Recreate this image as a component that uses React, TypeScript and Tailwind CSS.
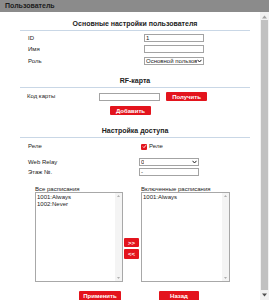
const red = 'bg-[#e3141d] text-white font-bold text-[6px] leading-none rounded-[1px] flex items-center justify-center';

function Title({ text, className }: { text: string; className: string }) {
  return (
    <div className={`${className} h-[14px] leading-[13px] border-b border-[#c9d7e6] text-center text-[7px] font-bold text-[#222]`}>
      {text}
    </div>
  );
}

function Field({ value }: { value: string }) {
  return (
    <div className="w-[60px] h-[8px] border border-[#a3a3a3] bg-white text-[6px] leading-[6px] px-[1px] text-[#222]">
      {value}
    </div>
  );
}

function Select({ value, className }: { value: string; className: string }) {
  return (
    <div className={`${className} w-[60px] h-[8px] border border-[#a3a3a3] bg-white flex items-center justify-between px-[1px] text-[6px] leading-none text-[#222]`}>
      <span className="overflow-hidden whitespace-nowrap">{value}</span>
      <svg width="5" height="4" viewBox="0 0 5 4" className="shrink-0">
        <path d="M0.5 0.8 L2.5 3 L4.5 0.8" fill="none" stroke="#222" strokeWidth="1" />
      </svg>
    </div>
  );
}

function ListBox({ items, width }: { items: string[]; width: string }) {
  return (
    <div className={`${width} h-[90px] border border-[#a8a8a8] bg-white flex`}>
      <div className="flex-1 text-[6px] leading-[6.5px] text-[#222] pl-[1px] pt-[1px]">
        {items.map((i) => (
          <div key={i}>{i}</div>
        ))}
      </div>
      <div className="w-[7px] bg-[#f4f4f4] flex flex-col justify-between items-center py-[2px]">
        <svg width="3" height="2" viewBox="0 0 3 2"><path d="M0 2 L1.5 0 L3 2Z" fill="#b0b0b0" /></svg>
        <svg width="3" height="2" viewBox="0 0 3 2"><path d="M0 0 L1.5 2 L3 0Z" fill="#b0b0b0" /></svg>
      </div>
    </div>
  );
}

export default function App() {
  return (
    <div className="w-[269px] h-[300px] overflow-hidden flex flex-col bg-white font-['Liberation_Sans',Arial,sans-serif] text-[#222]">
      <div className="h-[12px] shrink-0 bg-[#8b8b8b] pl-[5px] text-[7px] font-bold leading-[12px] text-[#1c1c1c]">
        Пользователь
      </div>

      <div className="flex flex-1 min-h-0">
        <div className="w-[260px] pl-[20px]">
          <div className="w-[230px] flex flex-col text-[6px]">
            <Title text="Основные настройки пользователя" className="mt-[5px]" />

            <div className="mt-[3px] flex items-center h-[8px]">
              <div className="w-[124px] pl-[8px]">ID</div>
              <Field value="1" />
            </div>
            <div className="mt-[3px] flex items-center h-[8px]">
              <div className="w-[124px] pl-[8px]">Имя</div>
              <Field value="" />
            </div>
            <div className="mt-[4px] flex items-center h-[8px]">
              <div className="w-[124px] pl-[8px]">Роль</div>
              <Select value="Основной пользов" className="" />
            </div>

            <Title text="RF-карта" className="mt-[9px]" />

            <div className="mt-[4px] flex items-center h-[9px]">
              <div className="w-[79px] pl-[7px]">Код карты</div>
              <div className="w-[61px] h-[8px] border border-[#a3a3a3]" />
              <button className={`${red} ml-[6px] w-[41px] h-[9px]`}>Получить</button>
            </div>
            <button className={`${red} mt-[5px] ml-[90px] w-[41px] h-[9px]`}>Добавить</button>

            <Title text="Настройка доступа" className="mt-[9px]" />

            <div className="mt-[5px] flex items-center h-[7px]">
              <div className="w-[121px] pl-[8px]">Реле</div>
              <span className="w-[6px] h-[6px] bg-[#e3141d] rounded-[1px] flex items-center justify-center">
                <svg width="5" height="5" viewBox="0 0 5 5">
                  <path d="M1 2.6 L2 3.6 L4 1.2" fill="none" stroke="#fff" strokeWidth="0.9" />
                </svg>
              </span>
              <span className="ml-[2px]">Реле</span>
            </div>
            <div className="mt-[8px] flex items-center h-[8px]">
              <div className="w-[119px] pl-[8px]">Web Relay</div>
              <Select value="0" className="" />
            </div>
            <div className="mt-[2px] flex items-center h-[8px]">
              <div className="w-[119px] pl-[8px]">Этаж №.</div>
              <Field value="-" />
            </div>

            <div className="mt-[10px] flex">
              <div className="ml-[15px] flex flex-col">
                <div className="h-[6px] leading-[6px]">Все расписания</div>
                <ListBox items={['1001:Always', '1002:Never']} width="w-[88px]" />
              </div>
              <div className="ml-[1px] mt-[52px] flex flex-col gap-[2px]">
                <button className={`${red} w-[15px] h-[9px]`}>&gt;&gt;</button>
                <button className={`${red} w-[15px] h-[10px]`}>&lt;&lt;</button>
              </div>
              <div className="ml-[2px] flex flex-col">
                <div className="h-[6px] leading-[6px]">Включенные расписания</div>
                <ListBox items={['1001:Always']} width="w-[89px]" />
              </div>
            </div>

            <div className="mt-[9px] flex">
              <button className={`${red} ml-[59px] w-[42px] h-[10px]`}>Применить</button>
              <button className={`${red} ml-[38px] w-[40px] h-[10px]`}>Назад</button>
            </div>
          </div>
        </div>

        <div className="w-[9px] bg-[#f1f1f1] flex flex-col items-center">
          <svg width="5" height="4" viewBox="0 0 5 4" className="mt-[3px]"><path d="M0 3.5 L2.5 0.5 L5 3.5Z" fill="#a3a3a3" /></svg>
          <div className="mt-[1px] w-[7px] flex-1 bg-[#c1c1c1]" />
          <svg width="5" height="4" viewBox="0 0 5 4" className="mt-[3px] mb-[3px]"><path d="M0 0.5 L2.5 3.5 L5 0.5Z" fill="#505050" /></svg>
        </div>
      </div>
    </div>
  );
}
